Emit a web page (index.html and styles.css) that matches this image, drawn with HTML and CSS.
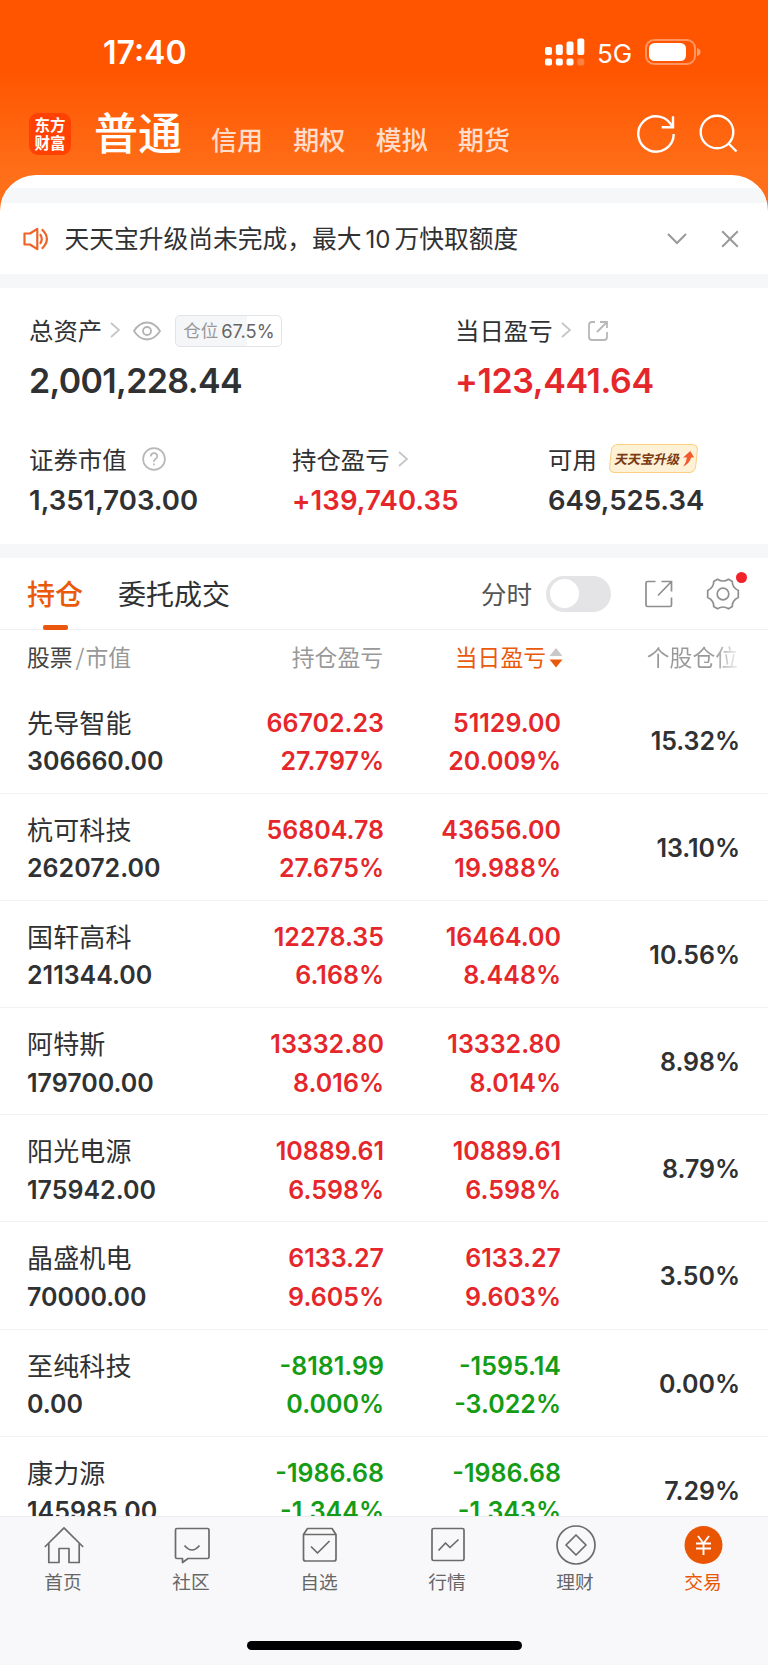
FILE: index.html
```html
<!DOCTYPE html>
<html lang="zh-CN">
<head>
<meta charset="utf-8">
<title>交易</title>
<link rel="stylesheet" href="styles.css">
</head>
<body>
<div class="app">
  <header class="top">
    <div class="status">
      <span class="clock">17:40</span>
      <svg class="signal" width="40" height="28" viewBox="0 0 40 28" fill="#fff">
        <rect x="0" y="9" width="7" height="8" rx="2"/><rect x="10.8" y="6.5" width="7" height="10.5" rx="2"/><rect x="21.5" y="3.5" width="7" height="13.5" rx="2"/><rect x="32.3" y="0.5" width="7" height="16.5" rx="2"/>
        <rect x="0" y="20.5" width="7" height="7" rx="2"/><rect x="10.8" y="20.5" width="7" height="7" rx="2"/><rect x="21.5" y="20.5" width="7" height="7" rx="2"/><rect x="32.3" y="20.5" width="7" height="7" rx="2" opacity=".25"/>
      </svg>
      <span class="net">5G</span>
      <svg class="battery" width="56" height="26" viewBox="0 0 56 26">
        <rect x="1" y="1" width="49" height="24" rx="8" fill="none" stroke="#fff" stroke-opacity=".38" stroke-width="2"/>
        <rect x="4" y="4" width="37" height="18" rx="5.5" fill="#fff"/>
        <path d="M52 9 Q55.5 10 55.500 13 T52 17Z" fill="#fff" fill-opacity=".45"/>
      </svg>
    </div>
    <nav class="accounts">
      <div class="logo">东方<br>财富</div>
      <span class="account-on">普通</span>
      <span class="account">信用</span><span class="account">期权</span><span class="account">模拟</span><span class="account">期货</span>
      <svg class="refresh" width="40" height="40" viewBox="0 0 40 40" fill="none" stroke="#fff" stroke-width="2.4"><path d="M37.700 20A17.700 17.700 0 1 1 36.400 13.300"/><path d="M37 2.300V13.300H25.700"/></svg>
      <svg class="search" width="40" height="40" viewBox="0 0 40 40" fill="none" stroke="#fff" stroke-width="2.400"><circle cx="18" cy="18" r="16.300"/><path d="M29.500 29.500L37.500 37.500"/></svg>
    </nav>
  </header>

  <main class="sheet">
    <div class="band band-first"></div>
    <section class="notice">
      <svg class="speaker" width="26" height="24" viewBox="0 0 26 24" fill="none" stroke="#ee6326" stroke-width="2.200" stroke-linejoin="round"><path d="M1.500 6.500H7L14.300 1.800V22.200L7 17.500H1.500Z"/><path d="M17 7.200Q20.500 12 17 16.800" /><path d="M18.800 2.200Q29 12 18.800 21.800"/></svg>
      <span class="notice-text">天天宝升级尚未完成，最大<span class="latin">10</span>万快取额度</span>
      <svg class="down" width="20" height="12" viewBox="0 0 20 12" fill="none" stroke="#999" stroke-width="2"><path d="M1 1L10 10L19 1"/></svg>
      <svg class="close" width="18" height="18" viewBox="0 0 18 18" fill="none" stroke="#999" stroke-width="2"><path d="M1.200 1.200L16.800 16.800M16.800 1.200L1.200 16.800"/></svg>
    </section>
    <div class="band"></div>

    <section class="assets">
      <div class="primary">
        <div>
          <div class="label">总资产
            <svg class="arrow" width="10" height="16" viewBox="0 0 10 16"><path d="M1 1L9 8L1 15"/></svg>
            <svg class="eye" width="28" height="20" viewBox="0 0 28 20" fill="none" stroke="#b3b3b3" stroke-width="1.800"><path d="M1 10Q6.500 1.500 14 1.500T27 10Q21.500 18.500 14 18.500T1 10Z"/><circle cx="14" cy="10" r="4"/></svg>
            <span class="ratio"><span class="ratio-name">仓位</span><span class="ratio-num">67.5%</span></span>
          </div>
          <div class="big">2,001,228.44</div>
        </div>
        <div>
          <div class="label">当日盈亏
            <svg class="arrow" width="10" height="16" viewBox="0 0 10 16"><path d="M1 1L9 8L1 15"/></svg>
            <svg class="share-s" width="22" height="22" viewBox="0 0 22 22" fill="none" stroke="#b8b8b8" stroke-width="1.800"><path d="M8 2H5Q2 2 2 5V17Q2 20 5 20H17Q20 20 20 17V12M13 2H20V8M20 2L10 12"/></svg>
          </div>
          <div class="big red big-gain">+123,441.64</div>
        </div>
      </div>
      <div class="secondary">
        <div>
          <div class="label">证券市值
            <svg class="help" width="24" height="24" viewBox="0 0 24 24" fill="none" stroke="#b8b8b8" stroke-width="1.700"><circle cx="12" cy="12" r="10.900"/><path d="M8.700 9.500Q8.900 6.200 12 6.200T15.300 9.200Q15.300 10.700 13.500 12T12 15"/><path d="M12 16.500V18.300"/></svg>
          </div>
          <div class="mid">1,351,703.00</div>
        </div>
        <div>
          <div class="label">持仓盈亏
            <svg class="arrow" width="10" height="16" viewBox="0 0 10 16"><path d="M1 1L9 8L1 15"/></svg>
          </div>
          <div class="mid red mid-gain">+139,740.35</div>
        </div>
        <div>
          <div class="label">可用
            <span class="promo"><span class="promo-text">天天宝升级</span><svg width="12" height="16" viewBox="0 0 12 16"><path d="M7.500 0L12 6.500H9Q8.500 12 2 15.500Q5 11 4.800 6.500H1Z" fill="#f1592f"/></svg></span>
          </div>
          <div class="mid">649,525.34</div>
        </div>
      </div>
    </section>
    <div class="band"></div>

    <section class="tabs">
      <span class="tab tab-on">持仓</span>
      <span class="tab">委托成交</span>
      <span class="minute">分时</span>
      <span class="switch"><i class="knob"></i></span>
      <svg class="share" width="28" height="28" viewBox="0 0 28 28" fill="none" stroke="#8f8f8f" stroke-width="1.700"><path d="M10.500 1.500H2.500Q1 1.500 1 3V25Q1 26.500 2.500 26.500H25Q26.500 26.500 26.500 25V17.500M16.500 1.500H26.500V11.500M26.500 1.500L13 15.500"/></svg>
      <span class="gear"><svg width="34" height="34" viewBox="0 0 34 34" fill="none" stroke="#8f8f8f" stroke-width="1.700" stroke-linejoin="round"><path d="M11.500 2.200Q17 5.800 22.500 2.200L26.300 4.400Q26 10.500 32.300 13.500V20.500Q26 23.500 26.300 29.600L22.500 31.800Q17 28.200 11.500 31.800L7.700 29.600Q8 23.500 1.700 20.500V13.500Q8 10.500 7.700 4.400Z"/><circle cx="17" cy="17" r="5.800"/></svg><i class="dot"></i></span>
    </section>

    <section class="list">
      <div class="head">
        <span><span class="dark">股票</span><span class="slash">/</span>市值</span>
        <span class="r">持仓盈亏</span>
        <span class="r sort">当日盈亏<svg width="14" height="20" viewBox="0 0 14 20"><path d="M7 0L13.500 8H.5Z" fill="#c9c9c9"/><path d="M7 19.500L13.500 11.500H.5Z" fill="#ea5a0b"/></svg></span>
        <span class="r fade">个股仓位</span>
      </div>
      <div class="row"><div><p class="name">先导智能</p><p>306660.00</p></div><div class="r red"><p>66702.23</p><p>27.797%</p></div><div class="r red"><p>51129.00</p><p>20.009%</p></div><div class="r pct">15.32%</div></div>
      <div class="row"><div><p class="name">杭可科技</p><p>262072.00</p></div><div class="r red"><p>56804.78</p><p>27.675%</p></div><div class="r red"><p>43656.00</p><p>19.988%</p></div><div class="r pct">13.10%</div></div>
      <div class="row"><div><p class="name">国轩高科</p><p>211344.00</p></div><div class="r red"><p>12278.35</p><p>6.168%</p></div><div class="r red"><p>16464.00</p><p>8.448%</p></div><div class="r pct">10.56%</div></div>
      <div class="row"><div><p class="name">阿特斯</p><p>179700.00</p></div><div class="r red"><p>13332.80</p><p>8.016%</p></div><div class="r red"><p>13332.80</p><p>8.014%</p></div><div class="r pct">8.98%</div></div>
      <div class="row"><div><p class="name">阳光电源</p><p>175942.00</p></div><div class="r red"><p>10889.61</p><p>6.598%</p></div><div class="r red"><p>10889.61</p><p>6.598%</p></div><div class="r pct">8.79%</div></div>
      <div class="row"><div><p class="name">晶盛机电</p><p>70000.00</p></div><div class="r red"><p>6133.27</p><p>9.605%</p></div><div class="r red"><p>6133.27</p><p>9.603%</p></div><div class="r pct">3.50%</div></div>
      <div class="row"><div><p class="name">至纯科技</p><p>0.00</p></div><div class="r green"><p>-8181.99</p><p>0.000%</p></div><div class="r green"><p>-1595.14</p><p>-3.022%</p></div><div class="r pct">0.00%</div></div>
      <div class="row"><div><p class="name">康力源</p><p>145985.00</p></div><div class="r green"><p>-1986.68</p><p>-1.344%</p></div><div class="r green"><p>-1986.68</p><p>-1.343%</p></div><div class="r pct">7.29%</div></div>
    </section>
  </main>

  <footer class="bottom">
    <nav class="menu">
      <span class="item"><svg viewBox="0 0 40 40"><path d="M.8 22L20 2.800L39.200 22M4.800 18V37.500H15V23.500H25V37.500H35.200V18"/></svg>首页</span>
      <span class="item"><svg viewBox="0 0 40 40"><path d="M5 3.500H35.500Q37 3.500 37 5V32Q37 33.500 35.500 33.500H16L10.500 37.500V33.500H5Q3.500 33.500 3.500 32V5Q3.500 3.500 5 3.500Z"/><path d="M12.500 20.500Q20 29.500 27.500 20.500"/></svg>社区</span>
      <span class="item"><svg viewBox="0 0 40 40"><path d="M3.500 9.500L7.500 3.500H32L36 9.500V34Q36 36 34 36H5.500Q3.500 36 3.500 34ZM3.500 9.500H36M11 21.500L17.500 28L29.500 16"/></svg>自选</span>
      <span class="item"><svg viewBox="0 0 40 40"><rect x="4" y="3.500" width="32" height="32" rx="1.500"/><path d="M10.500 25.500L17.500 18L22 22.500L30.500 14.500"/></svg>行情</span>
      <span class="item"><svg viewBox="0 0 40 40"><circle cx="20" cy="20" r="19"/><path d="M20 10L30 20L20 30L10 20Z"/></svg>理财</span>
      <span class="item item-on"><svg viewBox="0 0 40 40"><circle class="coin" cx="19.500" cy="20" r="19"/><path class="yen" d="M14 11L19.500 18.500L25 11M12 18.500H27M12 23.500H27M19.500 18.500V30"/></svg>交易</span>
    </nav>
    <div class="home-bar"></div>
  </footer>
</div>
</body>
</html>
```
FILE: styles.css
```css
* { box-sizing: border-box; }
body { margin: 0; background: #fff; color: #303133; font-family: "Noto Sans CJK SC", sans-serif; }
p { margin: 0; }
i { display: block; }
svg { display: block; flex: none; }
.app { width: 768px; height: 1665px; overflow: hidden; display: flex; flex-direction: column; }

.top { flex: none; height: 215px; background: linear-gradient(#ff5500 70px, #ff6f19 175px); color: #fff; }
.status { height: 92px; padding: 13px 0 0 103px; display: flex; align-items: center; font-family: Inter, sans-serif; }
.clock { width: 442px; font-size: 32px; font-weight: 600; line-height: 40px; padding-top: 1px; }
.signal { margin-top: -2px; }
.net { width: 48px; margin-left: 12px; font-size: 26px; font-weight: 400; padding-top: 1px; }
.battery { margin-top: -2px; }
.accounts { display: flex; padding-left: 29px; height: 83px; }
.logo { width: 42px; height: 42px; margin-top: 21px; padding-top: 3px; border-radius: 9px; background: #ff4103; text-align: center; font-size: 15.500px; font-weight: 700; line-height: 17.500px; }
.account-on { margin: 9px 29px 0 23px; font-size: 44px; line-height: 60px; font-weight: 500; }
.account { margin: 27px 30.300px 0 0; font-size: 26px; line-height: 40px; font-weight: 500; color: rgba(255,255,255,.78); }
.refresh { margin: 22px 0 0 96px; }
.search { margin: 22px 0 0 23px; }

.sheet { flex: 1; min-height: 0; margin-top: -40px; padding-top: 13px; background: #fff; border-radius: 36px 36px 0 0; overflow: hidden; }
.band { height: 14px; background: #f6f7f9; }
.band-first { height: 15px; }
.notice { height: 71px; padding-left: 23px; display: flex; align-items: center; }
.notice-text { width: 602px; margin-left: 15.500px; margin-top: -1px; font-size: 24.750px; line-height: 40px; white-space: nowrap; }
.latin { font-family: Inter, sans-serif; font-size: 24px; margin: 0 4px; }
.close { margin-left: 34px; }

.assets { height: 256px; padding: 23px 0 0 29px; }
.primary { display: grid; grid-template-columns: 426px 1fr; }
.secondary { display: grid; grid-template-columns: 263px 256px 1fr; margin-top: 39px; }
.label { display: flex; align-items: center; height: 40px; font-size: 24.400px; line-height: 36px; padding-bottom: 2.500px; white-space: nowrap; }
.arrow { margin: 1px 0 0 8px; fill: none; stroke: #c4c4c4; stroke-width: 1.700; }
.eye { margin: 2px 0 0 13px; }
.ratio { display: flex; align-items: center; width: 107px; height: 32px; margin: 3px 0 0 14px; padding-left: 7px; border: 1px solid #e2e3e6; border-radius: 5px; background: linear-gradient(90deg, #f5f6f8 71px, #fff 71px); font-size: 17.500px; line-height: 26px; color: #999; }
.ratio-name { margin-top: -2px; }
.ratio-num { margin-left: 3px; font-family: Inter, sans-serif; font-size: 18.300px; color: #666; }
.share-s { margin: 3px 0 0 16px; }
.big { font-family: Inter, sans-serif; font-size: 34px; font-weight: 600; line-height: 40px; margin-top: 10px; letter-spacing: -.65px; }
.big-gain { letter-spacing: -.4px; }
.mid { font-family: Inter, sans-serif; font-size: 27.500px; font-weight: 600; line-height: 40px; }
.mid-gain { letter-spacing: .1px; }
.help { margin: 1px 0 0 15px; }
.promo { display: flex; align-items: center; width: 87px; height: 29px; margin: 0 0 0 13px; padding-left: 4px; border: 1.500px solid #fbcf80; border-radius: 6px; background: #fff1d6; transform: skewX(-6deg); }
.promo-text { width: 67px; font-size: 13px; line-height: 20px; font-weight: 700; color: #7a3a14; transform: skewX(-6deg); }
.red { color: #e5272b; }
.green { color: #149c14; }

.tabs { height: 72px; padding-left: 27px; border-bottom: 1px solid #f0f0f2; display: flex; align-items: center; }
.tab { font-size: 28px; line-height: 71px; height: 71px; margin-right: 35px; margin-top: -1px; }
.tab-on { color: #ea5a0b; font-weight: 500; display: flex; flex-direction: column; align-items: center; }
.tab-on::after { content: ""; width: 25px; height: 5px; margin-top: -4px; border-radius: 2px; background: #e9560c; flex: none; }
.minute { margin-left: auto; margin-top: -2px; font-size: 25.500px; line-height: 40px; color: #555; }
.switch { width: 65px; height: 36px; margin-left: 14px; padding: 3.500px; border-radius: 18px; background: #e4e4e6; }
.knob { width: 29px; height: 29px; border-radius: 50%; background: #fff; }
.share { margin-left: 34px; }
.gear { position: relative; margin: 0 28px 0 33px; }
.dot { position: absolute; right: -7px; top: -5px; width: 11px; height: 11px; border-radius: 50%; background: #f2222a; }

.head, .row { display: grid; grid-template-columns: 176px 180px 177px 178px; padding-left: 27px; }
.head { height: 57px; padding-top: 7px; font-size: 22.800px; line-height: 40px; color: #999; white-space: nowrap; }
.dark { color: #444; }
.slash { margin: 0 1px 0 3px; }
.r { text-align: right; }
.sort { display: flex; justify-content: flex-end; align-items: center; height: 40px; margin-right: -3px; color: #ea5a0b; }
.sort svg { margin: 2px 0 0 3px; }
.fade { background: linear-gradient(90deg, #999 74%, #fff 104%); background-clip: text; -webkit-background-clip: text; color: transparent; justify-self: end; height: 40px; }
.list .r > p { margin-right: -1px; }
.row { height: 107.100px; padding-top: 17px; border-bottom: 1px solid #f2f2f4; font-family: Inter, sans-serif; font-size: 25px; font-weight: 600; line-height: 38.300px; }
.name { font-family: "Noto Sans CJK SC", sans-serif; font-size: 26px; font-weight: 400; line-height: 35px; margin-bottom: 3.300px; letter-spacing: .15px; }
.pct { padding-top: 18px; margin-right: -2px; letter-spacing: -.05px; }

.bottom { flex: none; height: 149px; background: #f8f8fa; border-top: 1px solid #ececef; }
.menu { display: flex; height: 124px; padding-top: 8px; }
.item { width: 128px; display: flex; flex-direction: column; align-items: center; font-size: 18.700px; line-height: 30px; color: #666; text-indent: -2px; }
.item svg { width: 40px; height: 40px; margin-bottom: 1px; fill: none; stroke: #6b6b6b; stroke-width: 1.700; stroke-linejoin: round; }
.item-on { color: #ea5504; }
.item .coin { fill: #ea5504; stroke: none; }
.item .yen { stroke: #fff; stroke-width: 1.900; }
.home-bar { width: 275px; height: 9px; margin: 0 auto; border-radius: 5px; background: #000; }
```
